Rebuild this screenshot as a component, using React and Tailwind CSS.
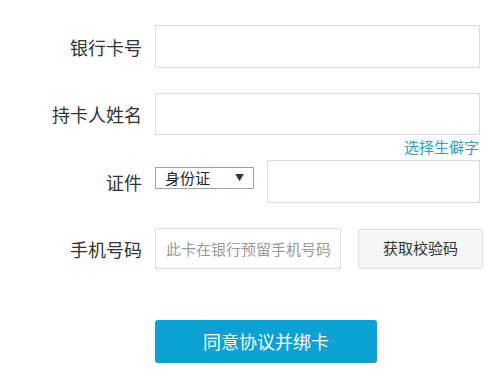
import { useState } from "react";

const font = { fontFamily: '"Noto Sans CJK SC", "Noto Sans", sans-serif' };

function Row({ label, children, className = "" }) {
  return (
    <div className={`flex items-center ${className}`}>
      <div className="w-[142px] shrink-0 text-right text-[18px] leading-[24px] text-[#333]">{label}</div>
      <div className="ml-[13px] flex items-center">{children}</div>
    </div>
  );
}

export default function App() {
  const [idType] = useState("身份证");

  return (
    <div className="w-[500px] h-[387px] bg-white overflow-hidden" style={font}>
      <div className="pt-[25px]">
        <Row label="银行卡号">
          <input className="w-[325px] h-[43px] border border-[#dcdcdc] outline-none px-3" />
        </Row>

        <Row label="持卡人姓名" className="mt-[25px]">
          <input className="w-[325px] h-[42px] border border-[#dcdcdc] outline-none px-3" />
        </Row>

        <div className="flex justify-end pr-[21px] mt-[2px]">
          <a className="text-[15px] leading-[20px] text-[#2a9fc8] cursor-pointer">选择生僻字</a>
        </div>

        <Row label="证件" className="mt-[3px]">
          <div className="self-start mt-[7px] w-[99px] h-[22px] border border-[#a0a0a0] flex items-center justify-between pl-[9px] pr-[9px] text-[15px] text-[#222]">
            <span>{idType}</span>
            <span className="text-[9px] text-[#333]">▼</span>
          </div>
          <input className="ml-[13px] w-[213px] h-[43px] border border-[#dcdcdc] outline-none px-3" />
        </Row>

        <Row label="手机号码" className="mt-[25px]">
          <input
            placeholder="此卡在银行预留手机号码"
            className="w-[186px] h-[41px] border border-[#dcdcdc] outline-none pl-[10px] text-[15px] placeholder:text-[#999]"
          />
          <button className="ml-[17px] w-[125px] h-[40px] border border-[#e3e3e3] bg-[#f5f5f5] rounded-[2px] text-[15px] text-[#333]">
            获取校验码
          </button>
        </Row>

        <div className="pl-[155px] mt-[51px]">
          <button className="w-[222px] h-[43px] rounded-[3px] bg-[#0ba2d3] text-white text-[18px]">
            同意协议并绑卡
          </button>
        </div>
      </div>
    </div>
  );
}
